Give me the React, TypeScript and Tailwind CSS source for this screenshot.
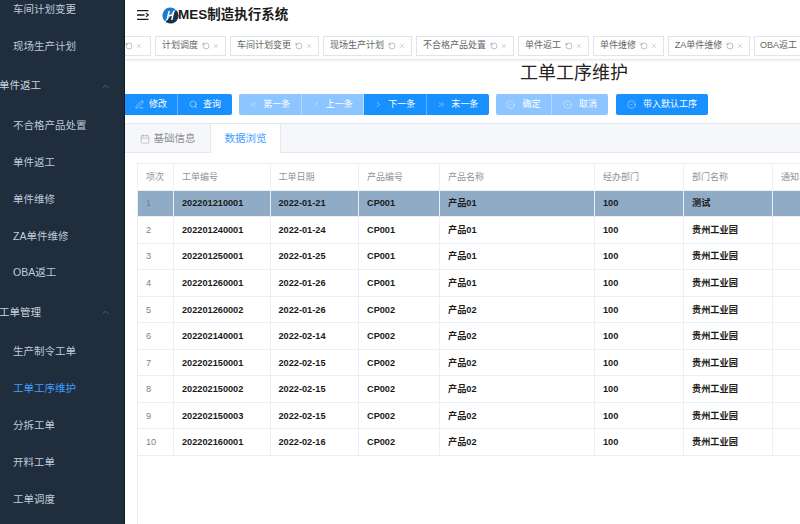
import { ChevronUp, ChevronLeft, ChevronRight, ChevronsLeft, ChevronsRight, Search, CircleCheck, CircleDot, RotateCcw, X, Calendar, PenLine } from "lucide-react";

const FONT = "font-['Liberation_Sans','Noto_Sans_CJK_SC',sans-serif]";

const MENU = [
  { label: "车间计划变更" },
  { label: "现场生产计划" },
  { label: "单件返工", section: true },
  { label: "不合格产品处置" },
  { label: "单件返工" },
  { label: "单件维修" },
  { label: "ZA单件维修" },
  { label: "OBA返工" },
  { label: "工单管理", section: true },
  { label: "生产制令工单" },
  { label: "工单工序维护", active: true },
  { label: "分拆工单" },
  { label: "开料工单" },
  { label: "工单调度" },
];

const TABS = [
  { label: "", w: "w-[39px]" },
  { label: "计划调度", w: "w-[71px]" },
  { label: "车间计划变更", w: "w-[89px]" },
  { label: "现场生产计划", w: "w-[89px]" },
  { label: "不合格产品处置", w: "w-[98px]" },
  { label: "单件返工", w: "w-[71px]" },
  { label: "单件维修", w: "w-[71px]" },
  { label: "ZA单件维修", w: "w-[82px]" },
  { label: "OBA返工", w: "w-[70px]" },
];

const ROWS = [
  ["1", "202201210001", "2022-01-21", "CP001", "产品01", "100", "测试"],
  ["2", "202201240001", "2022-01-24", "CP001", "产品01", "100", "贵州工业园"],
  ["3", "202201250001", "2022-01-25", "CP001", "产品01", "100", "贵州工业园"],
  ["4", "202201260001", "2022-01-26", "CP001", "产品01", "100", "贵州工业园"],
  ["5", "202201260002", "2022-01-26", "CP002", "产品02", "100", "贵州工业园"],
  ["6", "202202140001", "2022-02-14", "CP002", "产品02", "100", "贵州工业园"],
  ["7", "202202150001", "2022-02-15", "CP002", "产品02", "100", "贵州工业园"],
  ["8", "202202150002", "2022-02-15", "CP002", "产品02", "100", "贵州工业园"],
  ["9", "202202150003", "2022-02-15", "CP002", "产品02", "100", "贵州工业园"],
  ["10", "202202160001", "2022-02-16", "CP002", "产品02", "100", "贵州工业园"],
];

const HEAD = ["项次", "工单编号", "工单日期", "产品编号", "产品名称", "经办部门", "部门名称", "通知单号"];
const COLS = ["w-[36px]", "w-[96.5px]", "w-[88.5px]", "w-[81px]", "w-[155px]", "w-[89px]", "w-[89px]", "w-[80px]"];

function Logo() {
  return (
    <svg width="17" height="17" viewBox="0 0 17 17" className="shrink-0">
      <path d="M8.5 .5A8 8 0 0 0 3 14.3L13.5 2.2A8 8 0 0 0 8.5 .5Z" fill="#1b7cd2" />
      <path d="M8.5 16.5A8 8 0 0 0 14 2.7L3.5 14.8A8 8 0 0 0 8.5 16.5Z" fill="#14344f" />
      <path d="M6.4 4h1.5l-.9 3.8h3.2L11.1 4h1.5l-2.1 9H9l.9-3.9H6.7L5.8 13H4.3Z" fill="#fff" />
    </svg>
  );
}

function Btn({ label, icon, light, wide }: { label: string; icon: React.ReactNode; light?: boolean; wide?: boolean }) {
  return (
    <div className={`flex h-full items-center justify-center border-r last:border-r-0 ${wide ? "gap-[7px]" : "gap-[5px]"} ${light ? "bg-[#8cc5ff] border-r-[#b3d8ff]" : "bg-[#1890ff] border-r-[#66b1ff]"}`}>
      {icon}
      <span className="pt-px">{label}</span>
    </div>
  );
}

export default function App() {
  return (
    <div className={`${FONT} flex h-[524px] w-[800px] overflow-hidden bg-white text-[9px]`}>
      <aside className="w-[125px] shrink-0 overflow-hidden border-r border-[#101820] bg-[#1f2d3d] text-[#bfcbd9]">
        <div className="-mt-[8.5px]">
          {MENU.map((m, i) =>
            m.section ? (
              <div key={i} className="flex h-[42px] items-center justify-between pr-[13px] text-[#c9d3de]">
                <span className="-ml-[1px] text-[10.5px]">{m.label}</span>
                <ChevronUp size={11} strokeWidth={1.2} className="text-[#7d8b99]" />
              </div>
            ) : (
              <div key={i} className={`flex h-[36.9px] items-center pl-[13px] text-[10.5px] ${m.active ? "text-[#409eff]" : ""}`}>
                {m.label}
              </div>
            )
          )}
        </div>
      </aside>

      <main className="flex min-w-0 flex-1 flex-col">
        <header className="flex h-[30px] items-center pl-[12px]">
          <svg width="12" height="10" viewBox="0 0 12 10" className="shrink-0">
            <path d="M0 .7h11.5M0 5h7.5M0 9.3h11.5" stroke="#1a1a1a" strokeWidth="1.3" fill="none" />
            <path d="M9 3.2l2.4 1.8L9 6.8" stroke="#1a1a1a" strokeWidth="1.1" fill="none" />
          </svg>
          <span className="ml-[13px]"><Logo /></span>
          <span className="-ml-px text-[13.5px] font-bold leading-none text-[#1a1a1a]">MES制造执行系统</span>
        </header>

        <nav className="flex h-[30px] items-center gap-[4px] overflow-hidden border-b border-[#e6e9ee] pt-[2px] text-[#666] shadow-[0_1px_2px_rgba(0,0,0,0.06)]">
          {TABS.map((t, i) => (
            <div key={i} className={`${t.w} ${i === 0 ? "-ml-[13px]" : ""} flex h-[20px] shrink-0 items-center justify-center gap-[3.5px] border border-[#dfe4ed] bg-white`}>
              <span className="whitespace-nowrap pt-px">{t.label}</span>
              <RotateCcw size={8} strokeWidth={1.2} className="shrink-0" />
              <X size={6} strokeWidth={1.5} className="shrink-0 text-[#888]" />
            </div>
          ))}
        </nav>

        <h1 className="ml-[395px] mt-[1px] h-[33px] whitespace-nowrap text-[18px] font-normal leading-[24px] text-[#222]">
          工单工序维护
        </h1>

        <div className="flex h-[21px] items-stretch text-white">
          <div className="grid w-[107px] grid-cols-[53px_54px] overflow-hidden rounded-r-[2px]">
            <Btn label="修改" icon={<PenLine size={9} strokeWidth={1.3} />} />
            <Btn label="查询" icon={<Search size={9} strokeWidth={1.3} />} />
          </div>
          <div className="ml-[7px] grid w-[250px] grid-cols-4 overflow-hidden rounded-[2px]">
            <Btn light label="第一条" icon={<ChevronsLeft size={9} strokeWidth={1.3} />} />
            <Btn light label="上一条" icon={<ChevronLeft size={9} strokeWidth={1.3} />} />
            <Btn label="下一条" icon={<ChevronRight size={9} strokeWidth={1.3} />} />
            <Btn label="末一条" icon={<ChevronsRight size={9} strokeWidth={1.3} />} />
          </div>
          <div className="ml-[7px] grid w-[112px] grid-cols-2 overflow-hidden rounded-[2px]">
            <Btn light wide label="确定" icon={<CircleCheck size={9} strokeWidth={1.1} />} />
            <Btn light wide label="取消" icon={<CircleDot size={9} strokeWidth={1.1} />} />
          </div>
          <div className="ml-[8px] w-[92px] overflow-hidden rounded-[2px]">
            <Btn wide label="带入默认工序" icon={<CircleCheck size={9} strokeWidth={1.1} />} />
          </div>
        </div>

        <div className="mt-[8px] flex h-[30px] border-y border-[#e4e7ed] bg-[#f5f7fa] text-[10.5px]">
          <div className="flex w-[86px] items-center justify-center gap-[4px] border-r border-[#e4e7ed] pt-px text-[#8f8f8f]">
            <Calendar size={10} strokeWidth={1.1} />
            <span>基础信息</span>
          </div>
          <div className="-mb-px flex w-[70px] items-center justify-center border-r border-[#e4e7ed] bg-white pt-px text-[#409eff]">
            数据浏览
          </div>
        </div>

        <div className="mt-[10px] min-h-0 flex-1 overflow-hidden pl-[12px]">
          <div className="h-full w-[720px] border-l border-[#ebeef5]">
            <div className="flex h-[27.5px] border-y border-[#ebeef5] pt-px text-[#909399]">
              {HEAD.map((h, i) => (
                <div key={i} className={`${COLS[i]} flex shrink-0 items-center overflow-hidden whitespace-nowrap border-r border-[#ebeef5] pl-[8px] ${i === 0 ? "pl-[7px]" : ""}`}>
                  {h}
                </div>
              ))}
            </div>
            {ROWS.map((r, ri) => (
              <div key={ri} className={`flex h-[26.55px] border-b border-[#ebeef5] text-[9.2px] font-bold text-[#1a1a1a] ${ri === 0 ? "bg-[#90abc5]" : ""}`}>
                {COLS.map((c, i) => (
                  <div key={i} className={`${c} flex shrink-0 items-center whitespace-nowrap border-r border-[#ebeef5] pl-[8px] pt-[2px] ${i === 0 ? "font-normal text-[#7b7f86]" : ""}`}>
                    {r[i] ?? ""}
                  </div>
                ))}
              </div>
            ))}
          </div>
        </div>
      </main>
    </div>
  );
}
